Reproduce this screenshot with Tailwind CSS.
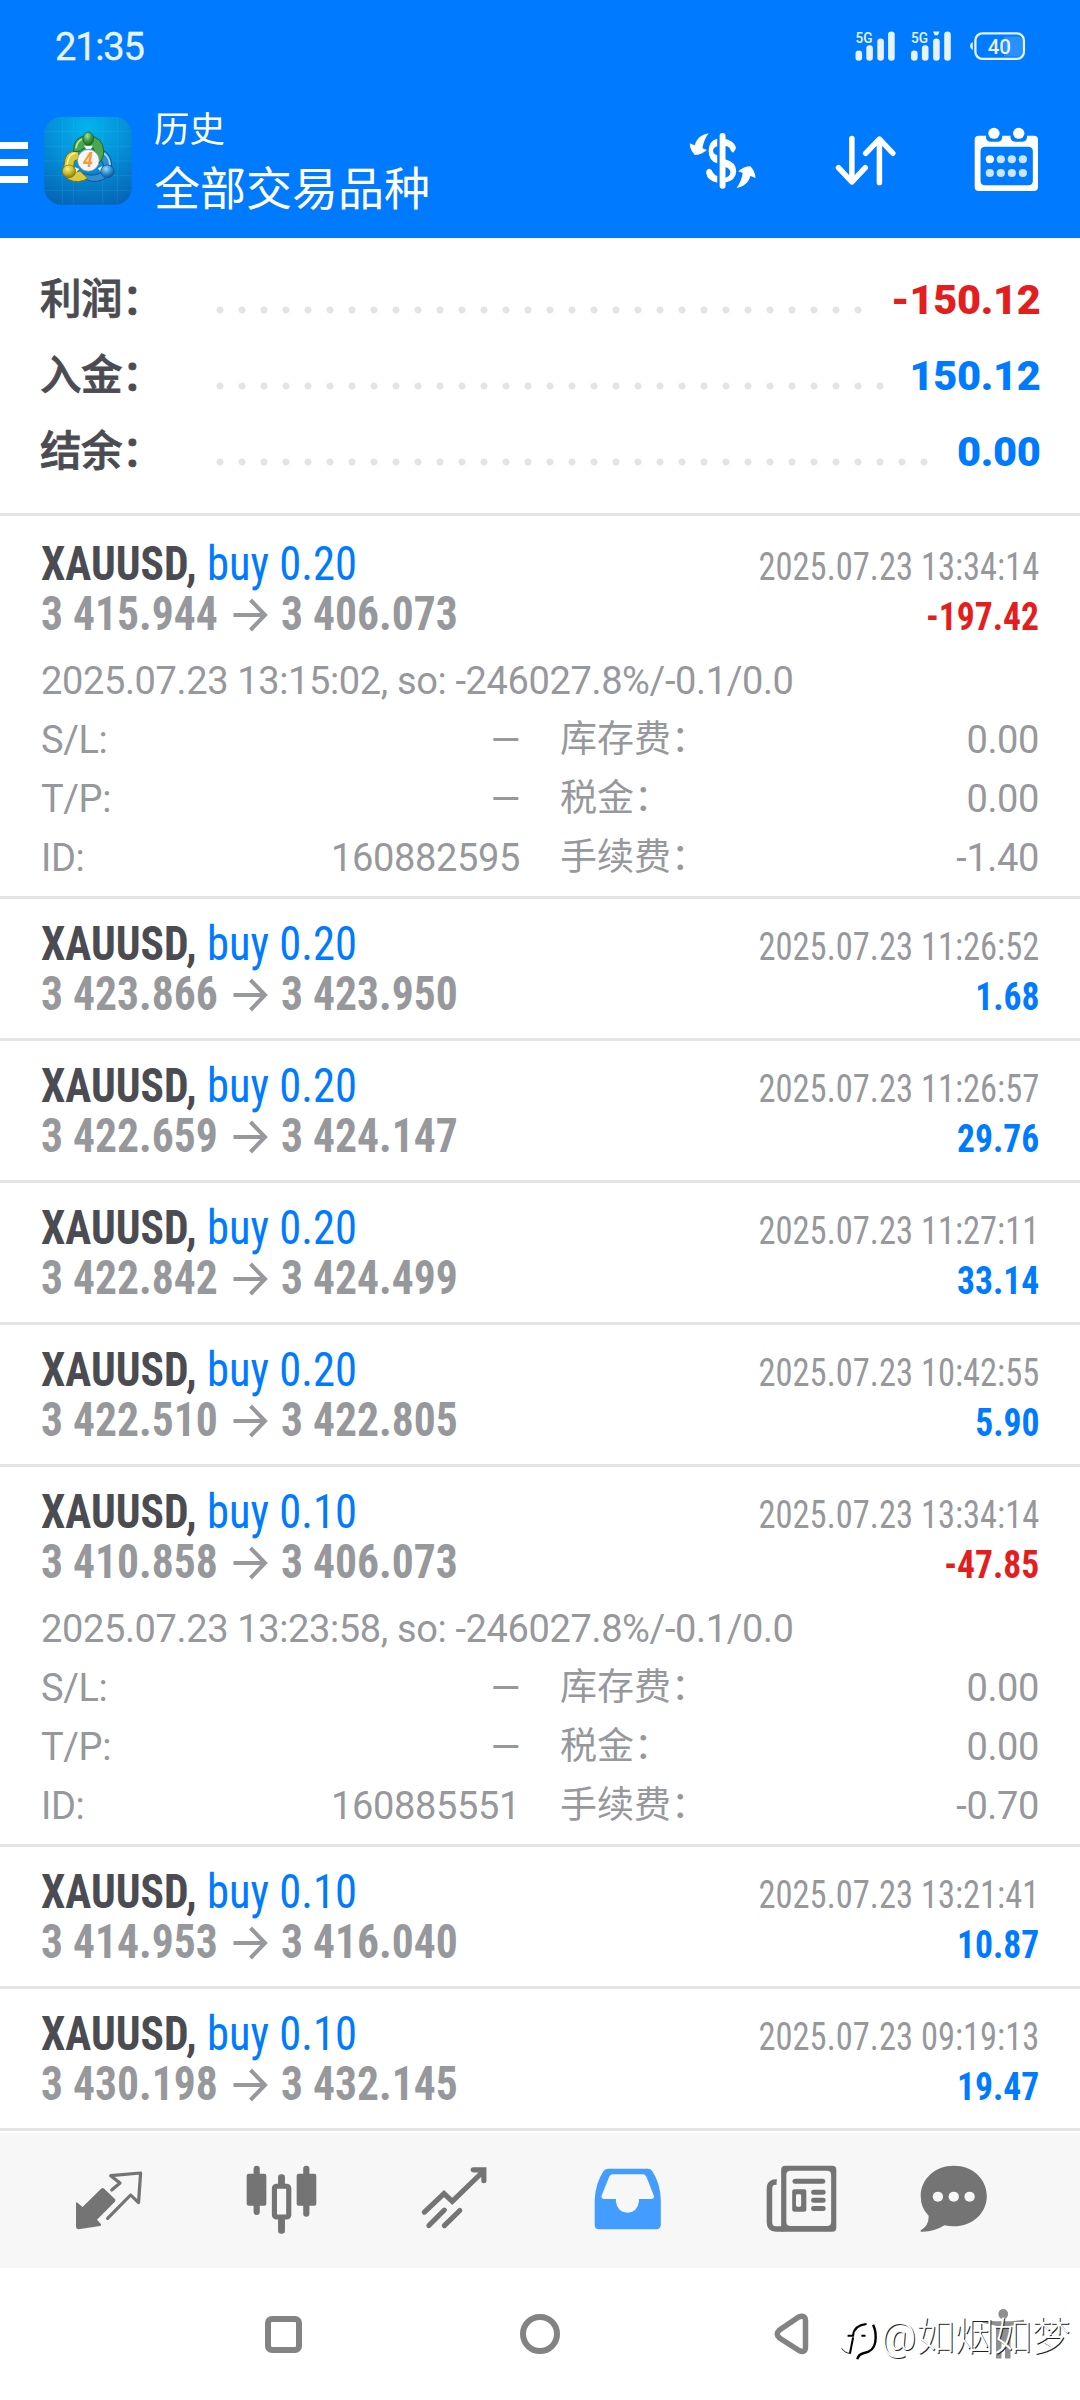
<!DOCTYPE html>
<html lang="zh-CN">
<head>
<meta charset="utf-8">
<title>历史</title>
<script src="https://cdn.jsdelivr.net/npm/@tailwindcss/browser@4"></script>
</head>
<body class="w-[1080px] h-[2400px] overflow-hidden bg-white font-['Roboto','Noto_Sans_CJK_SC',sans-serif] text-[#97989c]">

<header class="h-[238px] bg-[#007aff] text-white">
  <div class="flex h-[84px] items-center pt-[9px] pl-[55px] text-white/90">
    <span class="text-[38px] leading-[40px] font-normal tracking-[-1.2px] [-webkit-text-stroke:0.3px_currentColor]">21:35</span>
    <svg class="ml-auto mr-[54px] mb-[2px] h-[30px] w-[172px]" viewBox="854 30.5 172 30" fill="currentColor">
      <g font-family="Roboto" font-size="14.5" font-weight="500"><text x="855.5" y="42" textLength="17" lengthAdjust="spacingAndGlyphs">5G</text><text x="911" y="42" textLength="17" lengthAdjust="spacingAndGlyphs">5G</text></g>
      <rect x="855.5" y="50" width="6.6" height="10.2" rx="3.3"/><rect x="866.3" y="44.7" width="6.6" height="15.5" rx="3.3"/><rect x="877.3" y="38" width="6.6" height="22.2" rx="3.3"/><rect x="888.1" y="31" width="6.6" height="29.2" rx="3.3"/>
      <rect x="911" y="50" width="6.6" height="10.2" rx="3.3"/><rect x="921.9" y="44.7" width="6.6" height="15.5" rx="3.3"/><rect x="933.1" y="38" width="6.6" height="22.2" rx="3.3"/><rect x="944.2" y="31" width="6.6" height="29.2" rx="3.3"/>
      <path d="M933 31h6.5l-1.6 3.8h-3.2z"/>
      <path d="M972.8 41.5v8.2q-2.8-1.2-2.8-4.1t2.8-4.1z"/>
      <rect x="975.4" y="32.8" width="48.5" height="25.6" rx="7" fill="none" stroke="currentColor" stroke-width="2.3"/>
      <path d="M1004 36h13.500q4.500 0 4.500 4.500v11q0 4.500-4.500 4.500h-13.500z" opacity=".18"/>
      <text x="999.3" y="53" text-anchor="middle" font-family="Roboto" font-size="20.500" font-weight="500">40</text>
    </svg>
  </div>
  <div class="flex h-[154px] items-center">
    <div class="mt-[3px] flex w-[27.5px] flex-col gap-[9.500px]">
      <i class="h-[7.500px] bg-white"></i><i class="h-[7.500px] bg-white"></i><i class="h-[7.500px] bg-white"></i>
    </div>
    <svg class="ml-[16.500px] h-[88px] w-[88px]" viewBox="42 52 264 264">
      <defs>
        <radialGradient id="sky" cx=".5" cy=".12" r=".95"><stop offset="0" stop-color="#02b3ee"/><stop offset=".45" stop-color="#0492d8"/><stop offset="1" stop-color="#0563b4"/></radialGradient>
        <radialGradient id="gr" cx=".4" cy=".3" r=".7"><stop offset="0" stop-color="#b5e0a5"/><stop offset=".5" stop-color="#45a04a"/><stop offset="1" stop-color="#1a6a2c"/></radialGradient>
        <radialGradient id="ye" cx=".4" cy=".3" r=".7"><stop offset="0" stop-color="#f5ee90"/><stop offset=".5" stop-color="#cfc02c"/><stop offset="1" stop-color="#8d7d10"/></radialGradient>
        <radialGradient id="bl" cx=".4" cy=".3" r=".7"><stop offset="0" stop-color="#9adcf8"/><stop offset=".5" stop-color="#3a97d4"/><stop offset="1" stop-color="#12589a"/></radialGradient>
      </defs>
      <rect x="43" y="52" width="262" height="263" rx="50" fill="url(#sky)"/>
      <path d="M97 54V314M130 52V315M218 52V315M262 54V314M44 95H304M44 140H304M43 184H305M43 228H305M44 272H304" stroke="#5ecbf5" stroke-opacity=".22" stroke-width="2"/>
      <g stroke-linejoin="round">
        <path d="M152 218q8 22 32 27 34 4 52-20 18-34-2-62-8-10-18-12l-2 30 12 28-16 12q-28 12-58-3z" fill="#2f8fd2" stroke="#0d5590" stroke-width="3"/>
        <path d="M220 160q18 10 20 36" fill="none" stroke="#a7dcf7" stroke-width="5"/>
        <path d="M142 152q-30 2-37 26-6 20-2 44 8 24 42 24 18-2 28-10l-22-22-22 4 4-34 18-8z" fill="#d9cc3c" stroke="#7c7010" stroke-width="3"/>
        <path d="M136 160q-18 4-22 22-3 12-2 20" fill="none" stroke="#f7f2a8" stroke-width="5"/>
        <path d="M131 156q-4-46 43-48 44 4 47 44 2 24-16 40l-16-22q8-10 2-24h-30l-10 8z" fill="#4aa84c" stroke="#1c652b" stroke-width="3"/>
        <path d="M138 146q2-20 18-27" fill="none" stroke="#b6e5a9" stroke-width="5"/>
        <path d="M162 138h26l-5 11h-15z" fill="#f3f9ee"/><path d="M134 202l14 6-12 12zM204 206l12-6v22z" fill="#f3f9ee"/>
      </g>
      <ellipse cx="175" cy="117" rx="16" ry="20" fill="url(#gr)" stroke="#1a5f2a" stroke-width="2"/>
      <ellipse cx="117" cy="215" rx="20" ry="19" fill="url(#ye)" stroke="#7c7010" stroke-width="2"/>
      <ellipse cx="232" cy="215" rx="20" ry="19" fill="url(#bl)" stroke="#0d5590" stroke-width="2"/>
      <circle cx="175" cy="182" r="32.500" fill="#f6f6f8" stroke="#7c8a94" stroke-width="2"/>
      <text x="174" y="203" text-anchor="middle" font-family="Roboto" font-style="italic" font-weight="700" font-size="58" textLength="30" lengthAdjust="spacingAndGlyphs" fill="#f59a35">4</text>
    </svg>
    <div class="mt-[6px] ml-[22px]">
      <div class="text-[35.500px] leading-[50px]">历史</div>
      <div class="text-[46px] leading-[69px] tracking-normal">全部交易品种</div>
    </div>
    <svg class="ml-auto h-[57.300px] w-[67.500px]" viewBox="431 397 196 172" preserveAspectRatio="none" fill="#fff">
      <path d="M488 401C466 405 452 418 448 437Q442 436 433 431Q434 452 448 466Q466 466 483 451Q477 449 470 446Q474 420 488 401Z"/>
      <path d="M569 565C591 561 605 548 609 529Q615 530 624 535Q623 514 609 500Q591 500 574 515Q580 517 587 520Q583 546 569 565Z"/>
      <rect x="520" y="400" width="17" height="167" rx="8"/>
      <path d="M513 417Q488 424 488 453Q488 484 513 491V467Q501 462 501 453Q501 444 513 440Z"/>
      <path d="M535 417Q560 422 567 442Q568 449 559 459Q552 456 549 445Q544 439 535 438Z"/>
      <path d="M535 479Q568 487 568 515Q568 543 535 549V535Q551 531 551 518Q551 506 535 502Z"/>
      <path d="M481 521Q480 508 490 507Q498 509 500 518Q504 526 513 529V549Q484 543 481 521Z"/>
    </svg>
    <svg class="ml-[78px] h-[51.300px] w-[61.300px]" viewBox="855 406 178 154" preserveAspectRatio="none" fill="none" stroke="#fff" stroke-width="16" stroke-linecap="round" stroke-linejoin="round">
      <path d="M904 416V546M865 504L904 547L943 504M984 549V420M944 461L984 418L1023 461"/>
    </svg>
    <svg class="mr-[41px] mb-[2px] ml-[78.500px] h-[65.300px] w-[64.700px]" viewBox="1261 382 188 196" preserveAspectRatio="none" fill="#fff">
      <path fill-rule="evenodd" d="M1275 408H1435Q1447 408 1447 420V562Q1447 574 1435 574H1275Q1263 574 1263 562V420Q1263 408 1275 408ZM1294 441Q1280 441 1280 455V543Q1280 557 1294 557H1418Q1432 557 1432 543V455Q1432 441 1418 441Z"/>
      <path d="M1296 400H1343V414Q1341 426 1329 426H1309Q1297 425 1296 414ZM1367 400H1415V414Q1413 426 1401 426H1381Q1368 425 1367 414Z" fill="#007aff"/>
      <circle cx="1319" cy="401" r="16.500"/><circle cx="1391" cy="401" r="16.500"/>
      <circle cx="1307" cy="479" r="12"/>
      <g fill="#cce4ff"><circle cx="1339" cy="479" r="12"/><circle cx="1371" cy="479" r="12"/><circle cx="1403" cy="479" r="12"/><circle cx="1307" cy="520" r="12"/><circle cx="1339" cy="520" r="12"/><circle cx="1371" cy="520" r="12"/><circle cx="1403" cy="520" r="12"/></g>
    </svg>
  </div>
</header>

<section class="mb-[3px] h-[278px] border-b-[3px] border-[#e4e4e4] pt-[24px] pr-[39.500px] pl-[40px] text-[41.500px] leading-[76px] font-bold tracking-[-0.3px]">
  <div class="flex h-[76px]"><span class="w-[168.700px] font-medium tracking-[-0.5px] text-[#4b4b52] [-webkit-text-stroke:0.8px_#4b4b52]">利润：</span><i class="mt-[37px] h-[22px] w-[660px] bg-[radial-gradient(circle,#e4e4e4_3.2px,transparent_3.9px)] bg-size-[22px_22px]"></i><b class="ml-auto text-[#e31e1e]">-150.12</b></div>
  <div class="flex h-[76px]"><span class="w-[168.700px] font-medium tracking-[-0.5px] text-[#4b4b52] [-webkit-text-stroke:0.8px_#4b4b52]">入金：</span><i class="mt-[37px] h-[22px] w-[682px] bg-[radial-gradient(circle,#e4e4e4_3.2px,transparent_3.9px)] bg-size-[22px_22px]"></i><b class="ml-auto text-[#007aff]">150.12</b></div>
  <div class="flex h-[76px]"><span class="w-[168.700px] font-medium tracking-[-0.5px] text-[#4b4b52] [-webkit-text-stroke:0.8px_#4b4b52]">结余：</span><i class="mt-[37px] h-[22px] w-[726px] bg-[radial-gradient(circle,#e4e4e4_3.2px,transparent_3.9px)] bg-size-[22px_22px]"></i><b class="ml-auto text-[#007aff]">0.00</b></div>
</section>

<main id="deals"></main>

<nav class="mt-[2px] flex h-[135px] items-center bg-[#f7f7f7] pb-[2px] pl-[74.500px] text-[#747474]">
  <svg class="h-[60px] w-[68px]" viewBox="216 150 198 180" preserveAspectRatio="none" fill="currentColor">
    <path d="M219 248Q220 245 223 248L238 261L292 206Q297 202 301 206L333 238Q335 241 332 245L280 299L292 313Q293 317 289 318L226 328Q219 327 219 320Z"/>
    <path d="M323 210L347 189L320 167L407 159L401 248L378 225L311 295" fill="none" stroke="currentColor" stroke-width="9.500" stroke-linejoin="round" stroke-linecap="round"/>
  </svg>
  <svg class="ml-[103px] h-[69.300px] w-[71px]" viewBox="713 136 206 208" preserveAspectRatio="none" fill="currentColor">
    <rect x="715" y="162" width="57" height="96" rx="6"/><rect x="735" y="138" width="18" height="148" rx="9"/>
    <rect x="860" y="162" width="57" height="96" rx="6"/><rect x="879" y="138" width="18" height="153" rx="9"/>
    <rect x="806" y="164" width="20" height="40" rx="9"/><rect x="806" y="290" width="20" height="52" rx="9"/>
    <rect x="795.500" y="199.500" width="41.500" height="92.500" rx="6" fill="#f7f7f7" stroke="currentColor" stroke-width="15"/>
  </svg>
  <svg class="mb-[3px] ml-[104px] h-[63.300px] w-[67px]" viewBox="1222 143 195 188" preserveAspectRatio="none" fill="none" stroke="currentColor" stroke-width="15" stroke-linecap="round" stroke-linejoin="miter">
    <path d="M1232 280L1289 225L1313 248L1402 160M1374 154.500H1405V187" />
    <path d="M1245 320L1290 274M1290 320L1335 275" />
  </svg>
  <svg class="mb-[2px] ml-[106.500px] h-[62px] w-[67.500px]" viewBox="156 144 197 186" preserveAspectRatio="none" fill="#439cff">
    <path fill-rule="evenodd" d="M198 146H313Q321 146 326 153Q350 192 351 240V315Q350 327 338 328H170Q158 327 158 315V240Q160 190 184 153Q190 146 198 146ZM211 163Q204 163 201 169L178 227Q176 236 186 237H220V245Q224 276 254 278Q283 276 287 245V237H323Q332 236 331 228L309 170Q306 163 298 163Z"/>
  </svg>
  <svg class="mb-[2px] ml-[104px] h-[67.300px] w-[71px]" viewBox="654 136 206 202" preserveAspectRatio="none" fill="currentColor">
    <path fill-rule="evenodd" d="M710 138H846Q858 138 858 150V324Q858 336 846 336H698V150Q698 138 710 138ZM723 153Q713 154 713 165V307Q713 319 725 319H831Q843 319 843 307V165Q843 153 831 153Z"/>
    <path d="M685 187Q664 186 664 207V308Q664 328 683 328H704" fill="none" stroke="currentColor" stroke-width="16"/>
    <rect x="731" y="177" width="95" height="15" rx="7.500"/>
    <path fill-rule="evenodd" d="M737 209H765Q771 209 771 215V270Q771 276 765 276H737Q730 276 730 270V215Q730 209 737 209ZM745 224Q741 224 741 228V257Q741 261 745 261H752Q756 261 756 257V228Q756 224 752 224Z"/>
    <rect x="785" y="210" width="42" height="15" rx="7.500"/><rect x="785" y="234" width="42" height="15" rx="7.500"/><rect x="785" y="259" width="42" height="15" rx="7.500"/>
  </svg>
  <svg class="mb-[2px] ml-[83px] h-[67.300px] w-[67.500px]" viewBox="1101 136 196 202" preserveAspectRatio="none" fill="currentColor">
    <path d="M1199 138C1254 138 1295 178 1295 229S1254 320 1199 320Q1185 320 1172 317Q1140 338 1103 336V332Q1128 318 1126 288Q1103 264 1103 229C1103 178 1145 138 1199 138Z"/>
    <g fill="#f7f7f7"><circle cx="1153" cy="231" r="15"/><circle cx="1199" cy="231" r="15"/><circle cx="1245" cy="231" r="15"/></g>
  </svg>
</nav>

<footer class="relative flex h-[132px] items-center bg-white pl-[264.500px] text-[#838383]">
  <div class="h-[37px] w-[37px] rounded-[7px] border-[6px] border-current"></div>
  <div class="ml-[218.500px] h-[40px] w-[39.500px] rounded-full border-[6px] border-current"></div>
  <svg class="ml-[214.500px] h-[42px] w-[35px]" viewBox="0 0 35 42" fill="none" stroke="currentColor" stroke-width="5.500" stroke-linejoin="round"><path d="M25 3.800Q31.500 1.500 31.500 8V34Q31.500 40.500 25 37.500L5.500 25Q1 21 5.500 17Z"/></svg>
  <svg class="mb-[2px] ml-[172.500px] h-[51px] w-[43px]" viewBox="0 0 43 50" preserveAspectRatio="none" fill="#8f8f8f"><circle cx="21.200" cy="6" r="4.900"/><path d="M0.500 11.500L13 13H29.500L42 11.500V14.500L28.500 17.500V49.500H23V33H19.500V49.500H14V17.500L0.500 14.500Z"/></svg>
  <div class="absolute top-[43px] left-[840px] flex items-center">
    <svg class="mt-[8px] h-[42px] w-[40px]" viewBox="870 612 116 126" preserveAspectRatio="none" fill="none" stroke="#000">
      <path d="M892 659H908Q910 628 947 624M899 712L908 664M932 659H944" stroke-width="6"/><path d="M875 697Q882 710 901 713" stroke-width="2.500"/>
      <path d="M966 626Q977 650 972 680Q967 707 940 711Q924 714 920 730" stroke-width="7"/>
    </svg>
    <span class="ml-[1px] text-[38.500px] leading-[52px] font-light text-white [text-shadow:1px_1px_0_#222]">@如烟如梦</span>
  </div>
</footer>

<script>
const deals = [
  {lot:'0.20', from:'3 415.944', to:'3 406.073', time:'2025.07.23 13:34:14', pl:'-197.42', note:'2025.07.23 13:15:02, so: -246027.8%/-0.1/0.0', id:'160882595', fee:'-1.40'},
  {lot:'0.20', from:'3 423.866', to:'3 423.950', time:'2025.07.23 11:26:52', pl:'1.68'},
  {lot:'0.20', from:'3 422.659', to:'3 424.147', time:'2025.07.23 11:26:57', pl:'29.76'},
  {lot:'0.20', from:'3 422.842', to:'3 424.499', time:'2025.07.23 11:27:11', pl:'33.14'},
  {lot:'0.20', from:'3 422.510', to:'3 422.805', time:'2025.07.23 10:42:55', pl:'5.90'},
  {lot:'0.10', from:'3 410.858', to:'3 406.073', time:'2025.07.23 13:34:14', pl:'-47.85', note:'2025.07.23 13:23:58, so: -246027.8%/-0.1/0.0', id:'160885551', fee:'-0.70'},
  {lot:'0.10', from:'3 414.953', to:'3 416.040', time:'2025.07.23 13:21:41', pl:'10.87'},
  {lot:'0.10', from:'3 430.198', to:'3 432.145', time:'2025.07.23 09:19:13', pl:'19.47'}
];
const row = (k, v, k2, v2) => `
  <div class="flex h-[59px]"><span>${k}</span><span class="ml-auto">${v}</span>
    <span class="ml-[40px] flex w-[479px] justify-between"><span class="text-[37px] tracking-normal">${k2}</span><span>${v2}</span></span></div>`;
document.getElementById('deals').innerHTML = deals.map(d => `
<article class="border-b-[3px] border-[#e4e4e4] pt-[20px] pr-[41px] pl-[41px] ${d.note ? 'h-[380px]' : 'h-[142px]'}">
  <div class="font-stretch-condensed whitespace-nowrap leading-[50px]">
    <div class="flex h-[50px] items-baseline text-[48px]">
      <span class="w-[166px]"><b class="inline-block origin-left scale-x-[0.905] text-[#4b4b52]">XAUUSD,</b></span>
      <span class="inline-block origin-left scale-x-[0.928] text-[#007aff]">buy ${d.lot}</span>
      <span class="ml-auto inline-block origin-right scale-x-[0.885] text-[39px]">${d.time}</span>
    </div>
    <div class="flex h-[50px] items-baseline text-[48px] font-bold">
      <span class="w-[191.500px]"><span class="inline-block origin-left scale-x-[0.907]">${d.from}</span></span>
      <svg class="h-[34px] w-[36px] translate-y-[2px]" viewBox="0 0 36 34" fill="none" stroke="currentColor" stroke-width="4"><path d="M0.500 17H32M17.500 2L32 17L17.500 32"/></svg>
      <span class="ml-[12px] inline-block origin-left scale-x-[0.907]">${d.to}</span>
      <span class="ml-auto inline-block origin-right scale-x-[0.912] text-[39px] ${d.pl[0] === '-' ? 'text-[#e31e1e]' : 'text-[#007aff]'}">${d.pl}</span>
    </div>
  </div>
  ${d.note ? `<div class="mt-[12px] text-[38px] leading-[60px] tracking-[-0.37px]">
    <div class="h-[59px]">${d.note}</div>
    ${row('S/L:', '—', '库存费：', '0.00')}
    ${row('T/P:', '—', '税金：', '0.00')}
    ${row('ID:', d.id, '手续费：', d.fee)}
  </div>` : ''}
</article>`).join('');
</script>
</body>
</html>
